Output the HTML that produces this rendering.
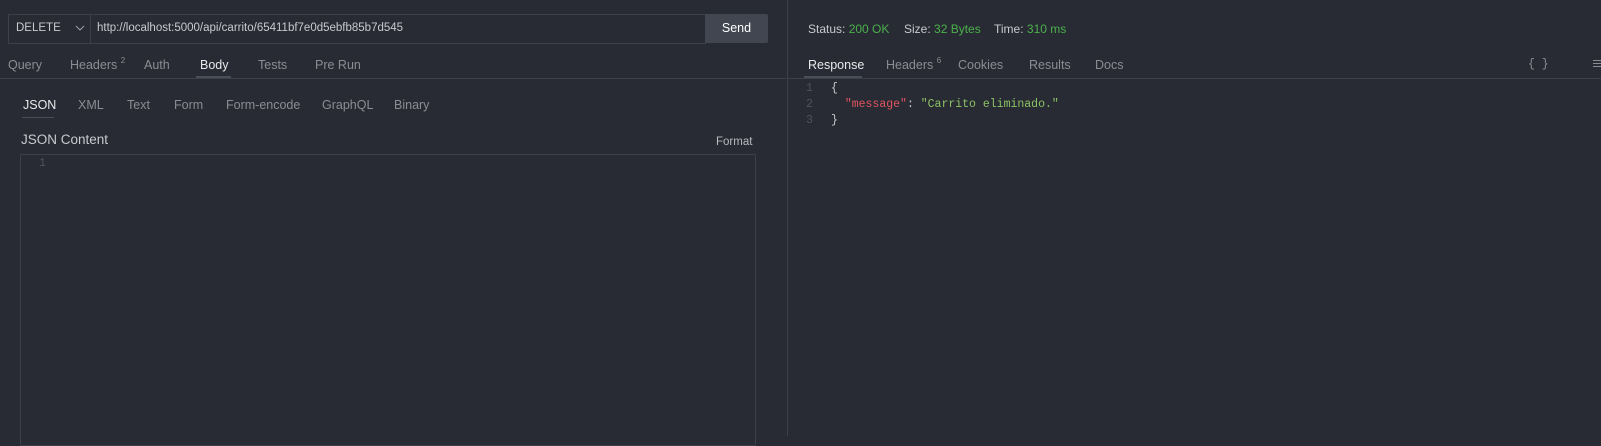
<!DOCTYPE html><html><head><style>
body{margin:0;width:1601px;height:436px;background:#282b33;font-family:"Liberation Sans",sans-serif;color:#9da0a6;overflow:hidden;position:relative;font-size:12px}
.a{position:absolute;white-space:nowrap}
.t{font-size:12.5px;color:#8a8d93;line-height:15px}
.mono{font-family:"Liberation Mono",monospace;font-size:11.5px}
sup{font-size:8px;vertical-align:baseline;position:relative;top:-6px;line-height:0}
</style></head><body>
<div class="a" style="left:8px;top:14px;width:697px;height:28px;border:1px solid #3d4048;border-right:none"></div>
<div class="a" style="left:90px;top:14px;width:1px;height:29px;background:#3d4048"></div>
<div class="a" style="left:16px;top:22px;color:#c8cad0;font-size:11.5px">DELETE</div>
<svg class="a" style="left:75px;top:25px" width="10" height="7"><path d="M1 1l4 4 4-4" stroke="#9da0a6" fill="none"/></svg>
<div class="a" style="left:97px;top:22px;color:#c8cad0;font-size:11.5px">http://localhost:5000/api/carrito/65411bf7e0d5ebfb85b7d545</div>
<div class="a" style="left:705px;top:14px;width:63px;height:29px;background:#414651;border-radius:0 2px 2px 0;color:#fff;font-size:12.5px;text-align:center;line-height:29px">Send</div>
<div class="a" style="left:0;top:78px;width:786px;height:1px;background:#3d4048"></div>
<div class="a" style="left:787px;top:0;width:1px;height:436px;background:#3d4048"></div>
<div class="a" style="left:788px;top:78px;width:813px;height:1px;background:#3d4048"></div>
<div class="a t" style="left:8px;top:58px">Query</div>
<div class="a t" style="left:70px;top:58px">Headers <sup>2</sup></div>
<div class="a t" style="left:144px;top:58px">Auth</div>
<div class="a t" style="left:200px;top:58px;color:#e8e9ec">Body</div>
<div class="a" style="left:196px;top:76px;width:35px;height:2px;background:#4a4e58"></div>
<div class="a t" style="left:258px;top:58px">Tests</div>
<div class="a t" style="left:315px;top:58px">Pre Run</div>
<div class="a t" style="left:23px;top:98px;color:#e8e9ec">JSON</div>
<div class="a" style="left:22px;top:117px;width:32px;height:1px;background:#4a4e58"></div>
<div class="a t" style="left:78px;top:98px">XML</div>
<div class="a t" style="left:127px;top:98px">Text</div>
<div class="a t" style="left:174px;top:98px">Form</div>
<div class="a t" style="left:226px;top:98px">Form-encode</div>
<div class="a t" style="left:322px;top:98px">GraphQL</div>
<div class="a t" style="left:394px;top:98px">Binary</div>
<div class="a" style="left:21px;top:132px;font-size:13.5px;color:#c8cad0">JSON Content</div>
<div class="a" style="left:716px;top:136px;font-size:11.5px;color:#b8bac0">Format</div>
<div class="a" style="left:20px;top:154px;width:734px;height:290px;border:1px solid #3d4048;border-radius:2px"></div>
<div class="a mono" style="left:39px;top:157px;color:#4e525b">1</div>
<div class="a" style="left:808px;top:22px;font-size:12px;color:#c8cad0">Status: <span style="color:#4bb14b">200 OK</span></div>
<div class="a" style="left:904px;top:22px;font-size:12px;color:#c8cad0">Size: <span style="color:#4bb14b">32 Bytes</span></div>
<div class="a" style="left:994px;top:22px;font-size:12px;color:#c8cad0">Time: <span style="color:#4bb14b">310 ms</span></div>
<div class="a t" style="left:808px;top:58px;color:#e8e9ec">Response</div>
<div class="a" style="left:804px;top:76px;width:58px;height:2px;background:#4a4e58"></div>
<div class="a t" style="left:886px;top:58px">Headers <sup>6</sup></div>
<div class="a t" style="left:958px;top:58px">Cookies</div>
<div class="a t" style="left:1029px;top:58px">Results</div>
<div class="a t" style="left:1095px;top:58px">Docs</div>
<div class="a mono" style="left:1528px;top:58px;color:#8a8d93">{ }</div>
<div class="a" style="left:1593px;top:60px;width:8px;height:1px;background:#8a8d93;box-shadow:0 3px #8a8d93,0 6px #8a8d93"></div>
<div class="a mono" style="left:806px;top:81px;color:#4e525b;line-height:16px">1<br>2<br>3</div>
<div class="a mono" style="left:831px;top:81px;color:#c8cad0;line-height:16px">{<br>&nbsp;&nbsp;<span style="color:#e05561">"message"</span>: <span style="color:#8cc265">"Carrito eliminado."</span><br>}</div>
</body></html>
